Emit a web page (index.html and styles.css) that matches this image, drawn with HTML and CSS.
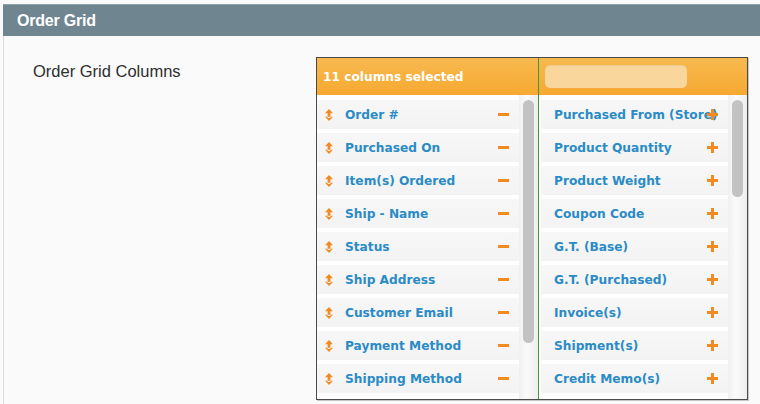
FILE: index.html
```html
<!DOCTYPE html>
<html lang="en">
<head>
    <meta charset="UTF-8">
    <title>Order Grid</title>
    <link rel="stylesheet" href="styles.css">
</head>
<body>
    <div class="section-head">Order Grid</div>
    <div class="section-body">
        <div class="field-label">Order Grid Columns</div>

        <div class="multiselect">
            <!-- selected columns -->
            <div class="ms-col ms-selected">
                <div class="ms-head">11 columns selected</div>
                <div class="ms-body">
                    <ul class="ms-list">
                        <li><span class="drag"><svg width="8" height="12" viewBox="0 0 8 12"><path d="M4 0 L8 4.2 H0 Z M4 12 L8 7.8 H0 Z M2.6 3 H5.4 V9 H2.6 Z" fill="#f18a21"/></svg></span><span class="name">Order #</span><span class="minus"></span></li>
                        <li><span class="drag"><svg width="8" height="12" viewBox="0 0 8 12"><path d="M4 0 L8 4.2 H0 Z M4 12 L8 7.8 H0 Z M2.6 3 H5.4 V9 H2.6 Z" fill="#f18a21"/></svg></span><span class="name">Purchased On</span><span class="minus"></span></li>
                        <li><span class="drag"><svg width="8" height="12" viewBox="0 0 8 12"><path d="M4 0 L8 4.2 H0 Z M4 12 L8 7.8 H0 Z M2.6 3 H5.4 V9 H2.6 Z" fill="#f18a21"/></svg></span><span class="name">Item(s) Ordered</span><span class="minus"></span></li>
                        <li><span class="drag"><svg width="8" height="12" viewBox="0 0 8 12"><path d="M4 0 L8 4.2 H0 Z M4 12 L8 7.8 H0 Z M2.6 3 H5.4 V9 H2.6 Z" fill="#f18a21"/></svg></span><span class="name">Ship - Name</span><span class="minus"></span></li>
                        <li><span class="drag"><svg width="8" height="12" viewBox="0 0 8 12"><path d="M4 0 L8 4.2 H0 Z M4 12 L8 7.8 H0 Z M2.6 3 H5.4 V9 H2.6 Z" fill="#f18a21"/></svg></span><span class="name">Status</span><span class="minus"></span></li>
                        <li><span class="drag"><svg width="8" height="12" viewBox="0 0 8 12"><path d="M4 0 L8 4.2 H0 Z M4 12 L8 7.8 H0 Z M2.6 3 H5.4 V9 H2.6 Z" fill="#f18a21"/></svg></span><span class="name">Ship Address</span><span class="minus"></span></li>
                        <li><span class="drag"><svg width="8" height="12" viewBox="0 0 8 12"><path d="M4 0 L8 4.2 H0 Z M4 12 L8 7.8 H0 Z M2.6 3 H5.4 V9 H2.6 Z" fill="#f18a21"/></svg></span><span class="name">Customer Email</span><span class="minus"></span></li>
                        <li><span class="drag"><svg width="8" height="12" viewBox="0 0 8 12"><path d="M4 0 L8 4.2 H0 Z M4 12 L8 7.8 H0 Z M2.6 3 H5.4 V9 H2.6 Z" fill="#f18a21"/></svg></span><span class="name">Payment Method</span><span class="minus"></span></li>
                        <li><span class="drag"><svg width="8" height="12" viewBox="0 0 8 12"><path d="M4 0 L8 4.2 H0 Z M4 12 L8 7.8 H0 Z M2.6 3 H5.4 V9 H2.6 Z" fill="#f18a21"/></svg></span><span class="name">Shipping Method</span><span class="minus"></span></li>
                    </ul>
                    <div class="scrollbar"><div class="thumb thumb-long"></div></div>
                </div>
            </div>

            <!-- available columns -->
            <div class="ms-col ms-available">
                <div class="ms-head"><input class="ms-search" type="text"></div>
                <div class="ms-body">
                    <ul class="ms-list">
                        <li><span class="name">Purchased From (Store)</span><span class="plus"></span></li>
                        <li><span class="name">Product Quantity</span><span class="plus"></span></li>
                        <li><span class="name">Product Weight</span><span class="plus"></span></li>
                        <li><span class="name">Coupon Code</span><span class="plus"></span></li>
                        <li><span class="name">G.T. (Base)</span><span class="plus"></span></li>
                        <li><span class="name">G.T. (Purchased)</span><span class="plus"></span></li>
                        <li><span class="name">Invoice(s)</span><span class="plus"></span></li>
                        <li><span class="name">Shipment(s)</span><span class="plus"></span></li>
                        <li><span class="name">Credit Memo(s)</span><span class="plus"></span></li>
                    </ul>
                    <div class="scrollbar"><div class="thumb thumb-short"></div></div>
                </div>
            </div>
        </div>
    </div>
</body>
</html>
```

FILE: styles.css
```css
/* General Styles */
body, html {
    margin: 0;
    padding: 0;
    height: 100%;
    background-color: #fafafa;
    font-family: 'Liberation Sans', Arial, sans-serif;
    overflow: hidden;
}

.section-head {
    margin: 4px 0 0 3px;
    height: 31px;
    line-height: 31px;
    padding-left: 14px;
    background-color: #6f8691;
    border-top: 1px solid #8fa1a9;
    color: #fff;
    font-weight: bold;
    font-size: 16px;
    letter-spacing: -0.2px;
}

.section-body {
    margin-left: 3px;
    border-left: 1px solid #dcdcdc;
    display: flex;
    align-items: flex-start;
    height: 380px;
}

.field-label {
    width: 283px;
    padding: 26px 0 0 29px;
    font-size: 16.5px;
    color: #2e2e2e;
}

/* Multiselect widget */
.multiselect {
    margin-top: 21px;
    width: 430px;
    height: 341px;
    border: 1px solid #4a4a4a;
    box-shadow: 1px 1px 0 #c8c8c8;
    display: flex;
    overflow: hidden;
    background-color: #fff;
    font-family: 'DejaVu Sans', Verdana, sans-serif;
}

.ms-col {
    display: flex;
    flex-direction: column;
}

.ms-selected {
    width: 221px;
    border-right: 1px solid #3c9a3c;
}

.ms-available {
    flex: 1;
}

.ms-head {
    height: 37px;
    background: linear-gradient(#f8b94f, #f6a931);
    display: flex;
    align-items: center;
    color: #fff;
    font-weight: bold;
    font-size: 12.2px;
    padding-left: 6px;
    flex-shrink: 0;
}

.ms-search {
    width: 142px;
    height: 23px;
    margin-left: 0;
    border: none;
    border-radius: 5px;
    background-color: #f8d69c;
    box-shadow: inset 0 1px 2px rgba(0, 0, 0, 0.05);
    outline: none;
    padding: 0;
}

.ms-body {
    flex: 1;
    display: flex;
    min-height: 0;
}

.ms-list {
    list-style: none;
    margin: 0;
    padding: 5px 0 0 0;
    flex: 1;
}

.ms-available .ms-list {
    padding-left: 2px;
}

.ms-list li {
    height: 29px;
    margin-bottom: 4px;
    display: flex;
    align-items: center;
    background: linear-gradient(#f7f7f7, #f3f3f3);
    color: #2a8bc6;
    font-weight: bold;
    font-size: 12.2px;
    white-space: nowrap;
}

.ms-list .name {
    flex: 1;
}

.ms-available .name {
    padding-left: 13px;
}

.drag {
    width: 28px;
    padding-left: 8px;
    box-sizing: border-box;
    display: flex;
    align-items: center;
}

.minus {
    width: 11px;
    height: 3px;
    margin-right: 10px;
    background-color: #f18a21;
}

.plus {
    width: 11px;
    height: 11px;
    margin-right: 10px;
    margin-left: -24px;
    background:
        linear-gradient(#f18a21, #f18a21) center / 11px 3px no-repeat,
        linear-gradient(#f18a21, #f18a21) center / 3px 11px no-repeat;
}

/* fake scrollbars */
.scrollbar {
    width: 19px;
    flex-shrink: 0;
    background: linear-gradient(90deg, #f0f0f0, #fafafa 40%, #eeeeee);
    display: flex;
    justify-content: center;
    padding-top: 5px;
    box-sizing: border-box;
}

.thumb {
    width: 11px;
    border-radius: 6px;
    background-color: #c2c2c2;
}

.thumb-long {
    height: 243px;
}

.thumb-short {
    height: 97px;
}
```
